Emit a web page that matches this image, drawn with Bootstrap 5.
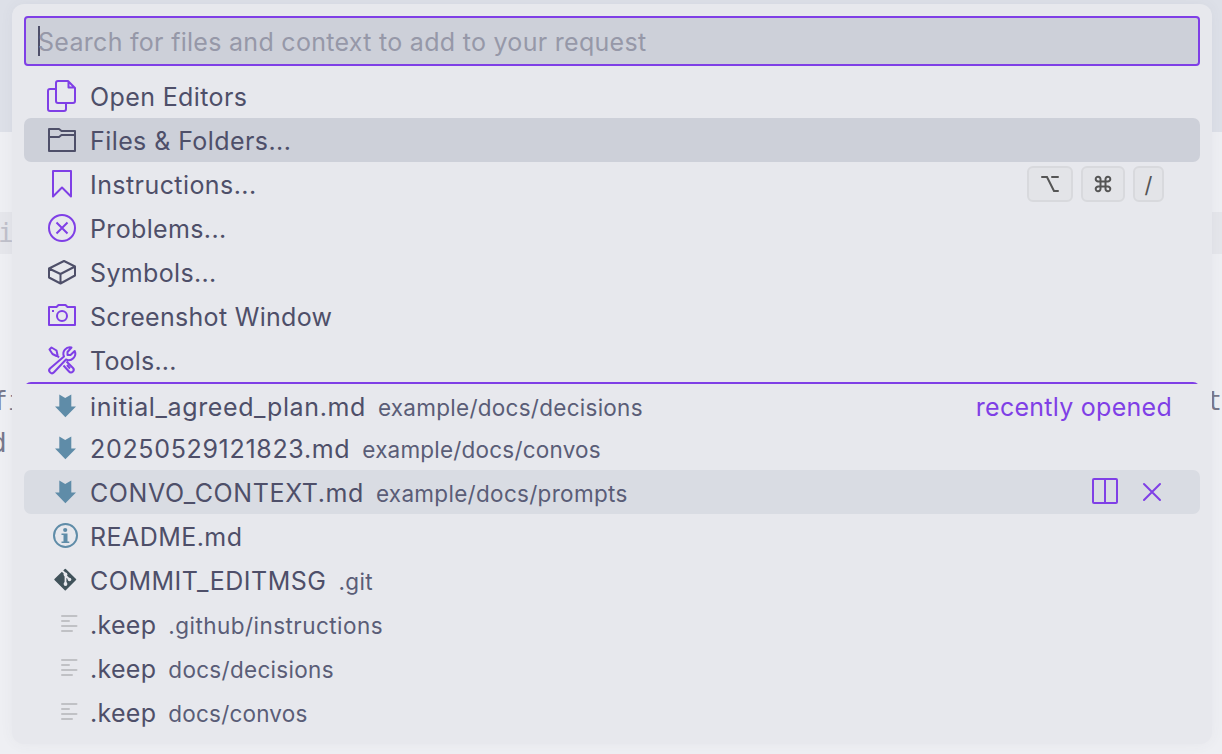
<!DOCTYPE html>
<html lang="en">
<head>
<meta charset="utf-8">
<meta name="viewport" content="width=device-width, initial-scale=1">
<title>Add context</title>
<link href="https://cdn.jsdelivr.net/npm/bootstrap@5.3.0/dist/css/bootstrap.min.css" rel="stylesheet">
<style>
  :root { --ink:#4e4f69; --accent:#7f3fe6; --panel:#e7e8ed; --sel:#cdd0d9; --hov:#d9dce3; }
  body { width:1222px; height:754px; background:#eeeff3; color:var(--ink); font-family:Inter,"Noto Sans",sans-serif; }
  .tabs-band { height:132px; background:#dde0e8; }
  .code-line { height:42px; font:26px/42px "DejaVu Sans Mono",monospace; color:#77788c; white-space:pre; }
  .code-line.current { background:#e5e6eb; color:#bfc0ca; margin-top:80px; margin-bottom:126px; }
  .c-i { margin-left:-2px; } .c-f { margin-left:-8px; } .c-d { margin-left:-9px; }
  .picker { position:relative; width:1200px; height:740px; margin-left:12px; background:var(--panel); border-radius:12px; box-shadow:0 0 14px rgba(76,79,105,.05); padding:12px; }
  .query { height:50px; background:var(--sel); border:2px solid var(--accent); border-radius:4px; padding-left:12px; }
  .caret { width:2px; height:30px; background:var(--ink); margin-right:-2px; }
  .hint { color:#9698a8; letter-spacing:.29px; }
  .hint, .title { font-size:25px; line-height:44px; white-space:pre; padding-top:2px; }
  .entries { margin-top:8px; }
  .entry { height:44px; padding:0 28px 0 22px; border-radius:7px; }
  .entry.selected { background:var(--sel); }
  .entry.hovered { background:var(--hov); }
  .entry.divided { background:linear-gradient(var(--accent),var(--accent)) top/100% 2px no-repeat; padding-top:4px; }
  .entry.divided .glyph { margin-top:-1px; }
  .glyph { width:32px; height:32px; margin-right:12px; flex:none; overflow:visible; fill:none; stroke:var(--accent); stroke-width:2; stroke-linejoin:round; }
  .glyph.dark { stroke:var(--ink); }
  .path { font-size:22.5px; line-height:44px; margin-left:12px; color:#5a5d77; padding-top:4px; white-space:pre; }
  .group-name { color:var(--accent); font-size:25px; line-height:44px; letter-spacing:.27px; padding-top:2px; }
  .t1 { letter-spacing:.38px; } .t2 { letter-spacing:.42px; } .t3 { letter-spacing:.43px; } .t4 { letter-spacing:.36px; }
  .t5 { letter-spacing:.35px; } .t6 { letter-spacing:.3px; } .t7 { letter-spacing:.2px; }
  .r1 { letter-spacing:.62px; } .r2 { letter-spacing:.68px; } .r3 { letter-spacing:.6px; } .r4 { letter-spacing:.45px; }
  .r5 { letter-spacing:.5px; } .r6 { letter-spacing:.3px; }
  .p1 { letter-spacing:.27px; } .p2 { letter-spacing:.2px; } .p3 { letter-spacing:.3px; } .p5 { letter-spacing:.4px; }
  .p6 { letter-spacing:.45px; } .p7 { letter-spacing:.3px; } .p8 { letter-spacing:.2px; }
  .keycap { height:36px; border:2px solid #d8d9dd; border-radius:6px; background:#e3e4e8; color:#555; font-size:22px; }
  .keys { gap:8px; margin-right:8px; }
  .k1 { width:46px; } .k2 { width:44px; } .k3 { width:31px; }
  .keycap svg { fill:none; stroke:#555; stroke-width:2; stroke-linecap:round; }
  .slash { padding-top:2px; }
  .tool { fill:none; stroke:var(--accent); stroke-width:2; stroke-linecap:round; stroke-linejoin:round; }
  .tool.close-x { margin-right:5px; }
</style>
</head>
<body class="position-relative overflow-hidden">
<div class="position-absolute top-0 start-0 w-100 h-100">
  <div class="tabs-band"></div>
  <div class="code-line current d-flex"><span class="c-i">i</span></div>
  <div class="code-line d-flex justify-content-between"><span class="c-f">fi</span><span class="c-t">t</span></div>
  <div class="code-line d-flex"><span class="c-d">d</span></div>
</div>
<svg width="0" height="0" class="position-absolute">
  <symbol id="md" viewBox="0 0 32 32"><path fill="#5f8ca8" stroke="none" d="M13.3 4.500 19.2 8 25.3 4.500V16.500H30L19.4 27.3 9 16.500H13.3Z"/></symbol>
  <symbol id="lines" viewBox="0 0 32 32"><path stroke="#c0c1c5" stroke-linecap="round" d="M16 8H30.500M16 13H23M16 18H30.500M16 23H26"/></symbol>
</svg>
<main class="picker mt-1">
  <div class="query d-flex align-items-center"><span class="caret"></span><span class="hint">Search for files and context to add to your request</span></div>
  <div class="entries d-flex flex-column">
    <div class="entry d-flex align-items-center">
      <svg class="glyph" viewBox="0 0 32 32"><path d="M10 9H4Q2 9 2 11V29Q2 31 4 31H18Q20 31 20 29V23M12 1H22L29 8V21Q29 23 27 23H12Q10 23 10 21V3Q10 1 12 1ZM22.500 1V7.500H29"/></svg>
      <span class="title t1">Open Editors</span></div>
    <div class="entry selected d-flex align-items-center">
      <svg class="glyph dark" viewBox="0 0 32 32"><path d="M3 5H13L15.500 7H29V27H3ZM3 13H13L15.500 11H29"/></svg>
      <span class="title t2">Files &amp; Folders...</span></div>
    <div class="entry d-flex align-items-center">
      <svg class="glyph" viewBox="0 0 32 32"><path d="M7 3H25V28.500L16 19.500 7 28.500Z"/></svg>
      <span class="title t3">Instructions...</span>
      <div class="keys d-flex ms-auto">
        <span class="keycap k1 d-flex align-items-center justify-content-center"><svg width="20" height="20"><path d="M2 3H7L14 17H18M12 3H18"/></svg></span>
        <span class="keycap k2 d-flex align-items-center justify-content-center"><svg width="18" height="18"><path d="M6.500 6.500H11.500V11.500H6.500ZM6.500 6.500H4.200A2.400 2.400 0 1 1 6.500 4.200ZM11.500 6.500H13.800A2.400 2.400 0 1 0 11.500 4.200ZM6.500 11.500H4.200A2.400 2.400 0 1 0 6.500 13.800ZM11.500 11.500H13.800A2.400 2.400 0 1 1 11.500 13.800Z"/></svg></span>
        <span class="keycap k3 d-flex align-items-center justify-content-center"><span class="slash">/</span></span>
      </div></div>
    <div class="entry d-flex align-items-center">
      <svg class="glyph" viewBox="0 0 32 32"><circle cx="16" cy="16" r="13"/><path d="M10.500 10.500 21.500 21.500M21.500 10.500 10.500 21.500"/></svg>
      <span class="title t4">Problems...</span></div>
    <div class="entry d-flex align-items-center">
      <svg class="glyph dark" viewBox="0 0 32 32"><path d="M3 12.500 18 5 29 10.500V19.500L14.500 27.500 3 21.500ZM3 12.500 14.500 18 29 10.500M14.500 18V27.500"/></svg>
      <span class="title t5">Symbols...</span></div>
    <div class="entry d-flex align-items-center">
      <svg class="glyph" viewBox="0 0 32 32"><path d="M3 7H10.500L12.500 5H19.500L21.500 7H29V25H3Z"/><circle cx="16" cy="16" r="5"/><path d="M6 11H8"/></svg>
      <span class="title t6">Screenshot Window</span></div>
    <div class="entry d-flex align-items-center">
      <svg class="glyph" viewBox="0 0 32 32"><path d="M18 12.500A6.500 6.500 0 0 1 25.500 3.500L21.500 8V11H24.500L28.700 7A6.500 6.500 0 0 1 20 15.500L8 28.300A2.700 2.700 0 0 1 4 24.500ZM3.500 5.500 5.500 3.500 10.500 6.500 11.500 11 10.500 12 6.500 10ZM11 11.500 13 13.500M17.500 21.500 23 27.500A2.600 2.600 0 0 0 27 24L20.500 17.500M21 21 24 24.500"/></svg>
      <span class="title t7">Tools...</span></div>
    <div class="entry divided d-flex align-items-center">
      <svg class="glyph"><use href="#md"/></svg>
      <span class="title r1">initial_agreed_plan.md</span><span class="path p1">example/docs/decisions</span><span class="group-name ms-auto">recently opened</span></div>
    <div class="entry d-flex align-items-center">
      <svg class="glyph"><use href="#md"/></svg>
      <span class="title r2">20250529121823.md</span><span class="path p2">example/docs/convos</span></div>
    <div class="entry hovered d-flex align-items-center">
      <svg class="glyph"><use href="#md"/></svg>
      <span class="title r3">CONVO_CONTEXT.md</span><span class="path p3">example/docs/prompts</span>
      <svg class="tool ms-auto" width="32" height="32"><path d="M4 4Q4 3 5 3H27Q28 3 28 4V26Q28 27 27 27H5Q4 27 4 26ZM16 3V27"/></svg>
      <svg class="tool close-x ms-3" width="30" height="32"><path d="M7 8 23 24M23 8 7 24"/></svg></div>
    <div class="entry d-flex align-items-center">
      <svg class="glyph" viewBox="0 0 32 32"><circle cx="19.500" cy="15.500" r="11.500" stroke="#5f8ca8"/><circle cx="19.200" cy="10" r="2.100" fill="#5f8ca8" stroke="none"/><path fill="#5f8ca8" stroke="none" d="M15.500 13.500H21.500V21.500H23.300V23H15.500V21.500H17.500V15H15.500Z"/></svg>
      <span class="title r4">README.md</span></div>
    <div class="entry d-flex align-items-center">
      <svg class="glyph" viewBox="0 0 32 32"><path fill="#41535b" stroke="#41535b" stroke-width="1.500" d="M19.300 5.500 29.500 15.500 19.300 25.700 9 15.500Z"/><path stroke="#e7e8ed" stroke-width="1.800" d="M16 6.500 19.500 10V20M19.500 11.500 23.500 15.500"/><g fill="#e7e8ed" stroke="none"><circle cx="19.500" cy="10.500" r="1.900"/><circle cx="19.500" cy="20" r="1.900"/><circle cx="23.500" cy="15.500" r="1.800"/></g></svg>
      <span class="title r5">COMMIT_EDITMSG</span><span class="path p5">.git</span></div>
    <div class="entry d-flex align-items-center">
      <svg class="glyph"><use href="#lines"/></svg><span class="title r6">.keep</span><span class="path p6">.github/instructions</span></div>
    <div class="entry d-flex align-items-center">
      <svg class="glyph"><use href="#lines"/></svg><span class="title r6">.keep</span><span class="path p7">docs/decisions</span></div>
    <div class="entry d-flex align-items-center">
      <svg class="glyph"><use href="#lines"/></svg><span class="title r6">.keep</span><span class="path p8">docs/convos</span></div>
  </div>
</main>
<script src="https://cdn.jsdelivr.net/npm/bootstrap@5.3.0/dist/js/bootstrap.bundle.min.js"></script>
</body>
</html>
